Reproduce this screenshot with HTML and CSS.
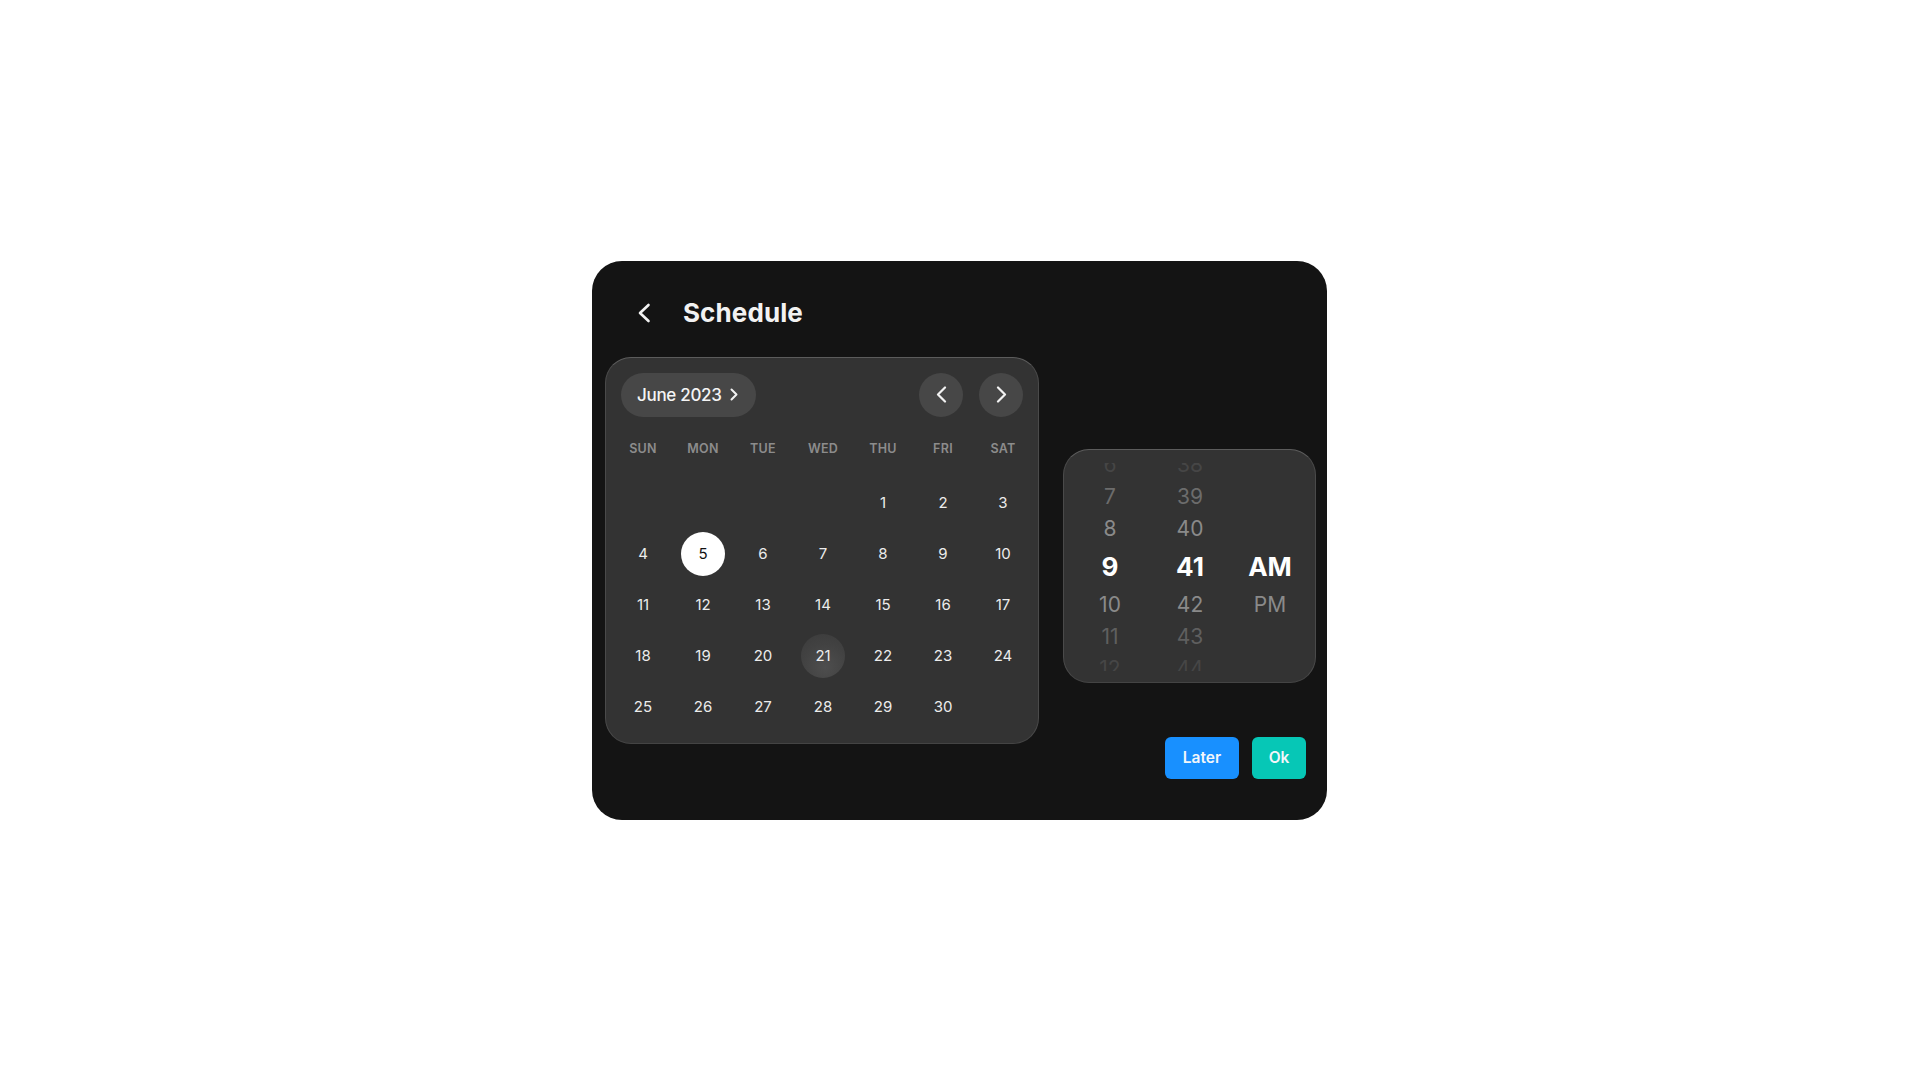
FILE: index.html
```html
<!DOCTYPE html>
<html lang="en">
<head>
<meta charset="utf-8">
<title>Schedule</title>
<link rel="stylesheet" href="styles.css">
</head>
<body>
<div class="dialog">
  <div class="header">
    <button class="back" aria-label="Back">
      <svg width="14" height="20" viewBox="0 0 14 20"><path d="M11.5 2 L3 10 L11.5 18" fill="none" stroke="#f2f2f2" stroke-width="2.6" stroke-linecap="round" stroke-linejoin="round"/></svg>
    </button>
    <h1 class="title">Schedule</h1>
  </div>
  <div class="body">
    <div class="calendar">
      <div class="cal-head">
        <button class="month-pill">June 2023
          <svg width="8" height="13" viewBox="0 0 8 13"><path d="M1.5 1.5 L6.5 6.5 L1.5 11.5" fill="none" stroke="#f2f2f2" stroke-width="2" stroke-linecap="round" stroke-linejoin="round"/></svg>
        </button>
        <div class="nav">
          <button class="nav-btn" aria-label="Previous month">
            <svg width="11" height="17" viewBox="0 0 11 17"><path d="M9 1.5 L2 8.5 L9 15.5" fill="none" stroke="#f2f2f2" stroke-width="2.2" stroke-linecap="round" stroke-linejoin="round"/></svg>
          </button>
          <button class="nav-btn" aria-label="Next month">
            <svg width="11" height="17" viewBox="0 0 11 17"><path d="M2 1.5 L9 8.5 L2 15.5" fill="none" stroke="#f2f2f2" stroke-width="2.2" stroke-linecap="round" stroke-linejoin="round"/></svg>
          </button>
        </div>
      </div>
      <div class="weekdays">
        <span>SUN</span><span>MON</span><span>TUE</span><span>WED</span><span>THU</span><span>FRI</span><span>SAT</span>
      </div>
      <div class="days">
        <span class="day empty"></span><span class="day empty"></span><span class="day empty"></span><span class="day empty"></span>
        <span class="day">1</span><span class="day">2</span><span class="day">3</span>
        <span class="day">4</span><span class="day selected">5</span><span class="day">6</span><span class="day">7</span><span class="day">8</span><span class="day">9</span><span class="day">10</span>
        <span class="day">11</span><span class="day">12</span><span class="day">13</span><span class="day">14</span><span class="day">15</span><span class="day">16</span><span class="day">17</span>
        <span class="day">18</span><span class="day">19</span><span class="day">20</span><span class="day today">21</span><span class="day">22</span><span class="day">23</span><span class="day">24</span>
        <span class="day">25</span><span class="day">26</span><span class="day">27</span><span class="day">28</span><span class="day">29</span><span class="day">30</span><span class="day empty"></span>
      </div>
    </div>
    <div class="side">
      <div class="picker">
        <div class="viewport">
          <div class="wheel">
            <span class="item far">6</span>
            <span class="item mid">7</span>
            <span class="item near">8</span>
            <span class="item sel">9</span>
            <span class="item near">10</span>
            <span class="item mid2">11</span>
            <span class="item far">12</span>
          </div>
          <div class="wheel">
            <span class="item far">38</span>
            <span class="item mid">39</span>
            <span class="item near">40</span>
            <span class="item sel">41</span>
            <span class="item near">42</span>
            <span class="item mid2">43</span>
            <span class="item far">44</span>
          </div>
          <div class="wheel">
            <span class="item blank"></span>
            <span class="item blank"></span>
            <span class="item blank"></span>
            <span class="item sel">AM</span>
            <span class="item near">PM</span>
          </div>
        </div>
      </div>
      <div class="actions">
        <button class="btn later">Later</button>
        <button class="btn ok">Ok</button>
      </div>
    </div>
  </div>
</div>
</body>
</html>
```

FILE: styles.css
```css
* { box-sizing: border-box; }
html, body { margin: 0; padding: 0; }
body {
  background: #ffffff;
  height: 100vh;
  display: flex;
  align-items: center;
  justify-content: center;
  font-family: Inter, "Noto Sans", "Liberation Sans", sans-serif;
}
button {
  font-family: inherit;
  border: none;
  padding: 0;
  cursor: pointer;
  color: inherit;
}
.dialog {
  width: 735px;
  height: 559px;
  margin-left: -1px;
  background: #141414;
  border-radius: 30px;
  padding: 0 11px 41px 13px;
  display: flex;
  flex-direction: column;
  color: #f2f2f2;
}
.header {
  height: 96px;
  padding: 8px 0 0 17px;
  display: flex;
  align-items: center;
  gap: 17px;
}
.back {
  width: 44px;
  height: 44px;
  background: transparent;
  display: flex;
  align-items: center;
  justify-content: center;
}
.title {
  margin: 0;
  font-size: 26px;
  font-weight: 700;
  letter-spacing: 0.1px;
  color: #f2f2f2;
}
.body {
  display: flex;
  gap: 24px;
  align-items: flex-start;
}
.calendar {
  width: 434px;
  height: 387px;
  background: #333333;
  border: 1px solid;
  border-color: #5c5c5c #4a4a4a #444444 #4a4a4a;
  border-radius: 26px;
  padding: 15px 15px 13px 15px;
}
.cal-head {
  height: 44px;
  display: flex;
  justify-content: space-between;
  align-items: center;
}
.month-pill {
  height: 44px;
  padding: 0 18px 0 16px;
  background: #474747;
  border-radius: 22px;
  display: flex;
  align-items: center;
  gap: 8px;
  font-size: 17px;
  font-weight: 500;
  color: #f4f4f4;
  letter-spacing: -0.3px;
}
.nav {
  display: flex;
  gap: 16px;
}
.nav-btn {
  width: 44px;
  height: 44px;
  border-radius: 50%;
  background: #474747;
  display: flex;
  align-items: center;
  justify-content: center;
}
.weekdays {
  margin-top: 22px;
  height: 20px;
  display: grid;
  grid-template-columns: repeat(7, 44px);
  column-gap: 16px;
  align-items: center;
  text-align: center;
  font-size: 12.5px;
  font-weight: 600;
  letter-spacing: 0.3px;
  color: #8c8c8c;
}
.days {
  margin-top: 22px;
  display: grid;
  grid-template-columns: repeat(7, 44px);
  grid-auto-rows: 44px;
  column-gap: 16px;
  row-gap: 7px;
}
.day {
  display: flex;
  align-items: center;
  justify-content: center;
  border-radius: 50%;
  font-size: 15px;
  font-weight: 400;
  color: #ececec;
}
.day.selected {
  background: #ffffff;
  color: #111111;
}
.day.today {
  background: radial-gradient(circle at 55% 75%, #4e4e4e 0%, #424242 55%, #3b3b3b 100%);
}
.side {
  display: flex;
  flex-direction: column;
  align-items: flex-end;
  padding-top: 92px;
}
.picker {
  width: 253px;
  height: 234px;
  background: #333333;
  border: 1px solid;
  border-color: #5c5c5c #4a4a4a #444444 #4a4a4a;
  border-radius: 26px;
  padding: 13px 0 0 6px;
}
.viewport {
  height: 208px;
  overflow: hidden;
  display: flex;
  align-items: flex-start;
}
.wheel {
  width: 80px;
  flex-shrink: 0;
  margin-top: -14px;
  display: flex;
  flex-direction: column;
  align-items: center;
}
.item {
  flex-shrink: 0;
  height: 32px;
  display: flex;
  align-items: center;
  justify-content: center;
  font-size: 21px;
  font-weight: 400;
  line-height: 1;
}
.item.sel {
  height: 44px;
  font-size: 26px;
  font-weight: 700;
  color: #ffffff;
}
.item.near { color: #8a8a8a; }
.item.mid { color: #6c6c6c; }
.item.mid2 { color: #5f5f5f; }
.item.far { color: #464646; }
.actions {
  margin-top: 54px;
  margin-right: 10px;
  display: flex;
  gap: 13px;
}
.btn {
  height: 42px;
  border-radius: 6px;
  font-size: 15.5px;
  font-weight: 600;
  color: #f2f6fa;
  display: flex;
  align-items: center;
  justify-content: center;
}
.btn.later { width: 74px; background: #1890ff; }
.btn.ok { width: 54px; background: #06c7b6; }
```
